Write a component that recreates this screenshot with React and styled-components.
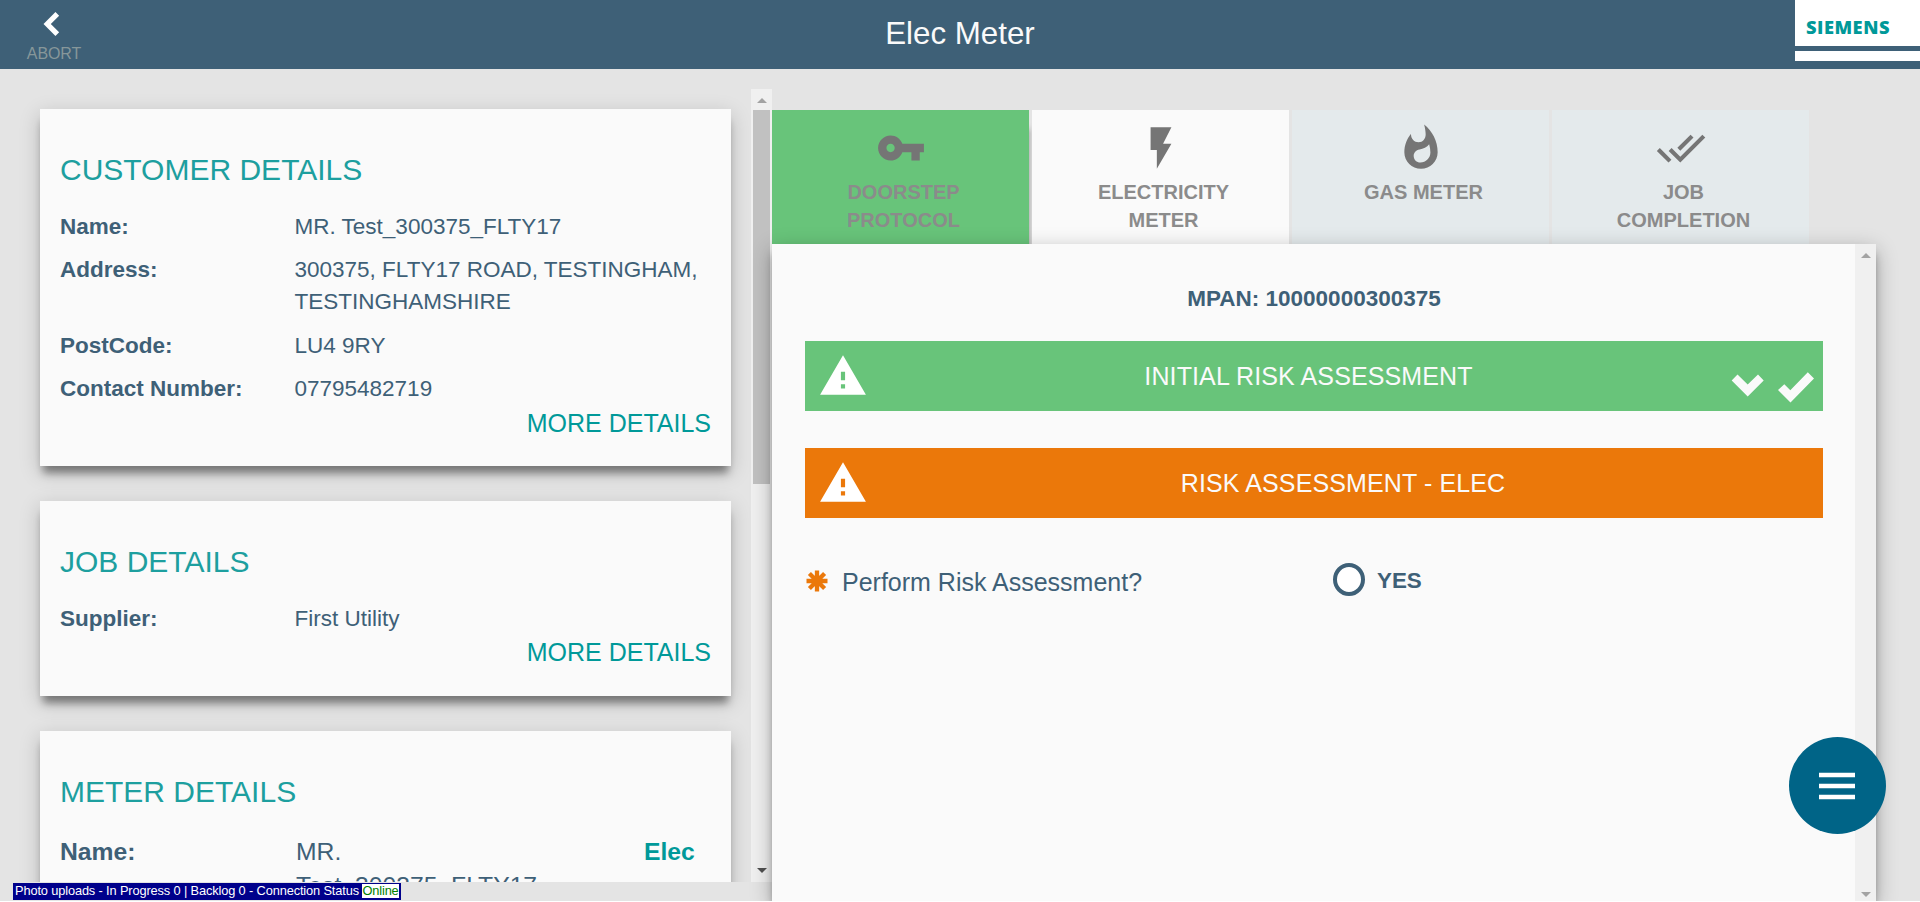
import React from "react";
import styled, { createGlobalStyle } from "styled-components";

const slate = "#3e6077";
const teal = "#009999";

const GlobalStyle = createGlobalStyle`
  * { box-sizing: border-box; }
  body {
    margin: 0;
    background: #fff;
    overflow: hidden;
    font-family: "Liberation Sans", Arial, sans-serif;
    color: ${slate};
  }
`;

const Page = styled.div`
  position: relative;
  width: 1920px;
  height: 901px;
  background: #e4e4e4;
  display: flex;
  flex-direction: column;
  overflow: hidden;
`;

const Header = styled.header`
  flex: none;
  height: 69px;
  background: ${slate};
  display: grid;
  grid-template-columns: 1fr auto 1fr;
`;

const AbortButton = styled.div`
  width: 108px;
  padding-top: 12px;
  display: flex;
  flex-direction: column;
  align-items: center;
  color: #87979a;
  font-size: 16px;
  line-height: 18px;
  letter-spacing: -0.1px;
  svg { display: block; margin-right: 5px; margin-bottom: 9px; }
`;

const Title = styled.h1`
  margin: 0;
  font-size: 31.3px;
  font-weight: 400;
  line-height: 67px;
  color: #fafafa;
`;

const Brand = styled.div`
  justify-self: end;
  width: 125px;
  display: flex;
  flex-direction: column;
  gap: 5px;
`;

const BrandName = styled.div`
  height: 46px;
  padding-left: 11px;
  background: #fff;
  color: ${teal};
  font-family: "Open Sans", "Noto Sans", sans-serif;
  font-weight: 800;
  font-size: 18.3px;
  line-height: 54px;
  letter-spacing: 0.5px;
`;

const BrandStripe = styled.div`
  height: 10px;
  background: #fff;
`;

const Body = styled.main`
  flex: 1;
  min-height: 0;
  display: flex;
`;

const Sidebar = styled.aside`
  width: 772px;
  height: 793px;
  margin-top: 20px;
  display: flex;
  justify-content: space-between;
  overflow: hidden;
`;

const CardList = styled.div`
  width: 731px;
  padding: 20px 0 0 40px;
  display: flex;
  flex-direction: column;
  gap: 35px;
`;

const Card = styled.section`
  flex: none;
  height: ${(p) => p.$height}px;
  padding: 43px 20px 0 20px;
  background: #fafafa;
  box-shadow: 0 10px 8px -3px rgba(0, 0, 0, 0.4), 0 6px 20px rgba(0, 0, 0, 0.19);
`;

const CardTitle = styled.h2`
  margin: 0 0 23px;
  font-size: 30px;
  font-weight: 400;
  line-height: 36px;
  color: #1d9f9f;
`;

const Row = styled.div`
  display: grid;
  grid-template-columns: ${(p) => (p.$large ? "236px 348px 1fr" : "234.5px 1fr")};
  font-size: ${(p) => (p.$large ? 24.7 : 22.5)}px;
  line-height: ${(p) => (p.$large ? 34 : 32)}px;
  margin-top: ${(p) => (p.$large ? 25 : 0)}px;
  margin-bottom: 11.4px;
`;

const Label = styled.span`
  font-weight: 700;
`;

const Value = styled.span`
  width: ${(p) => (p.$narrow ? "250px" : "auto")};
`;

const MeterKind = styled.span`
  font-weight: 700;
  color: ${teal};
`;

const MoreLink = styled.div`
  margin-top: -10px;
  text-align: right;
  font-size: 25px;
  line-height: 32px;
  color: ${teal};
`;

const ScrollTrack = styled.div`
  flex: none;
  width: 21px;
  display: flex;
  flex-direction: column;
  align-items: center;
  justify-content: space-between;
  background: #f0f0f0;
  padding: ${(p) => (p.$sunken ? "9px 0 4px" : "9px 0 9px 0")};
`;

const Thumb = styled.div`
  width: 17px;
  height: 374px;
  margin: 7px 0 auto;
  background: #c1c1c1;
`;

const Arrow = styled.div`
  width: 0;
  border: 5px solid transparent;
  border-top: ${(p) => (p.$up ? 0 : 5)}px solid ${(p) => (p.$up ? "transparent" : p.$color)};
  border-bottom: ${(p) => (p.$up ? 5 : 0)}px solid ${(p) => (p.$up ? p.$color : "transparent")};
`;

const Work = styled.section`
  width: 1104px;
  padding-top: 41px;
  display: flex;
  flex-direction: column;
`;

const Tabs = styled.nav`
  flex: none;
  height: 134px;
  display: flex;
  gap: 3px;
`;

const Tab = styled.div`
  width: 257px;
  padding-top: 13px;
  display: flex;
  flex-direction: column;
  align-items: center;
  background: ${(p) => p.$background};
  box-shadow: ${(p) => (p.$done ? "3px 16px 6px -3px rgba(0,0,0,0.35)" : "none")};
  svg { display: block; width: 50px; height: 50px; fill: #757575; margin-left: 1px; }
`;

const TabLabel = styled.div`
  width: 150px;
  margin: 5px 0 0 6px;
  text-align: center;
  font-size: 20px;
  font-weight: 700;
  line-height: 28px;
  color: #8b8b8b;
`;

const Panel = styled.div`
  position: relative;
  flex: 1;
  min-height: 0;
  display: flex;
  background: #fafafa;
  box-shadow: 0 8px 8px -3px rgba(0, 0, 0, 0.48), 0 6px 20px rgba(0, 0, 0, 0.3);
`;

const PanelContent = styled.div`
  flex: 1;
  padding: 39px 32px 0 33px;
`;

const Mpan = styled.div`
  text-align: center;
  font-size: 22.5px;
  font-weight: 700;
  line-height: 32px;
  margin-bottom: 26px;
`;

const Banner = styled.div`
  height: 70px;
  margin-bottom: 37px;
  padding: 0 9px 0 13px;
  display: flex;
  align-items: center;
  background: ${(p) => p.$background};
  color: #fafafa;
`;

const WarningIcon = styled.svg`
  width: 50px;
  height: 50px;
  fill: #fff;
`;

const BannerText = styled.div`
  flex: 1;
  padding-left: ${(p) => p.$shift}px;
  text-align: center;
  font-size: 25px;
  line-height: 32px;
  letter-spacing: 0.12px;
`;

const BannerMarks = styled.svg`
  width: 83px;
  height: 31px;
  margin-top: 22px;
  fill: #fafafa;
`;

const Question = styled.div`
  display: flex;
  align-items: center;
  height: 38px;
  margin-top: 43px;
  font-size: 25px;
`;

const RequiredMark = styled.svg`
  width: 22px;
  height: 22px;
  margin: 2px 14px 0 1px;
`;

const QuestionText = styled.span`
  width: 491px;
  padding-top: 4px;
`;

const Radio = styled.span`
  width: 32px;
  height: 33px;
  margin: -1px 12px 0 0;
  border: 4px solid ${slate};
  border-radius: 50%;
  background: #fff;
`;

const RadioLabel = styled.span`
  font-size: 22.4px;
  font-weight: 700;
  padding-top: 1px;
`;

const MenuButton = styled.div`
  position: absolute;
  left: 1788.5px;
  top: 737px;
  width: 97px;
  height: 97px;
  border-radius: 50%;
  background: #006487;
  display: flex;
  align-items: center;
  justify-content: center;
`;

const StatusBar = styled.div`
  position: absolute;
  left: 13px;
  top: 883px;
  height: 17px;
  padding: 1px 2px;
  background: #00008b;
  color: #fff;
  font-size: 12.8px;
  line-height: 14px;
  letter-spacing: -0.13px;
  white-space: pre;
`;

const Online = styled.span`
  display: inline-block;
  height: 14px;
  line-height: 14px;
  background: #fff;
  color: #008000;
`;

const tabs = [
  { label: "DOORSTEP PROTOCOL", background: "#68c47a", done: true, path: "M12.65 10C11.83 7.67 9.61 6 7 6c-3.31 0-6 2.69-6 6s2.69 6 6 6c2.61 0 4.83-1.67 5.65-4H17v4h4v-4h2v-4H12.65zM7 14c-1.1 0-2-.9-2-2s.9-2 2-2 2 .9 2 2-.9 2-2 2z" },
  { label: "ELECTRICITY METER", background: "#fafafa", path: "M7 2v11h3v9l7-12h-4l4-8z" },
  { label: "GAS METER", background: "#e4eaec", path: "M13.5.67s.74 2.65.74 4.8c0 2.06-1.35 3.73-3.41 3.73-2.07 0-3.63-1.67-3.63-3.73l.03-.36C5.21 7.51 4 10.62 4 14c0 4.42 3.58 8 8 8s8-3.58 8-8C20 8.61 17.41 3.8 13.5.67zM11.71 19c-1.78 0-3.22-1.4-3.22-3.14 0-1.62 1.05-2.76 2.81-3.12 1.77-.36 3.6-1.21 4.62-2.58.39 1.29.59 2.65.59 4.04 0 2.65-2.15 4.8-4.8 4.8z" },
  { label: "JOB COMPLETION", background: "#e4eaec", path: "M18 7l-1.41-1.41-6.34 6.34 1.41 1.41L18 7zm4.24-1.41L11.66 16.17 7.48 12l-1.41 1.41L11.66 19l12-12-1.42-1.41zM.41 13.41L6 19l1.41-1.41L1.83 12 .41 13.41z" },
];

const Warning = () => (
  <WarningIcon viewBox="0 0 24 24">
    <path d="M1 21h22L12 2 1 21zm12-3h-2v-2h2v2zm0-4h-2v-4h2v4z" />
  </WarningIcon>
);

const DetailRow = ({ label, children }) => (
  <Row>
    <Label>{label}</Label>
    <Value>{children}</Value>
  </Row>
);

export default function App() {
  return (
    <Page>
      <GlobalStyle />
      <Header>
        <AbortButton>
          <svg width="17" height="24" viewBox="0 0 17 24">
            <path d="M14.300 1.900 4.200 12l10.100 10.100" fill="none" stroke="#fff" strokeWidth="5.200" />
          </svg>
          ABORT
        </AbortButton>
        <Title>Elec Meter</Title>
        <Brand>
          <BrandName>SIEMENS</BrandName>
          <BrandStripe />
        </Brand>
      </Header>
      <Body>
        <Sidebar>
          <CardList>
            <Card $height={357}>
              <CardTitle>CUSTOMER DETAILS</CardTitle>
              <DetailRow label="Name:">MR. Test_300375_FLTY17</DetailRow>
              <DetailRow label="Address:">300375, FLTY17 ROAD, TESTINGHAM, TESTINGHAMSHIRE</DetailRow>
              <DetailRow label="PostCode:">LU4 9RY</DetailRow>
              <DetailRow label="Contact Number:">07795482719</DetailRow>
              <MoreLink>MORE DETAILS</MoreLink>
            </Card>
            <Card $height={195}>
              <CardTitle>JOB DETAILS</CardTitle>
              <DetailRow label="Supplier:">First Utility</DetailRow>
              <MoreLink>MORE DETAILS</MoreLink>
            </Card>
            <Card $height={357}>
              <CardTitle>METER DETAILS</CardTitle>
              <Row $large>
                <Label>Name:</Label>
                <Value $narrow>MR. Test_300375_FLTY17</Value>
                <MeterKind>Elec</MeterKind>
              </Row>
            </Card>
          </CardList>
          <ScrollTrack>
            <Arrow $up $color="#a3a3a3" />
            <Thumb />
            <Arrow $color="#505050" />
          </ScrollTrack>
        </Sidebar>
        <Work>
          <Tabs>
            {tabs.map((t) => (
              <Tab key={t.label} $background={t.background} $done={t.done}>
                <svg viewBox="0 0 24 24"><path d={t.path} /></svg>
                <TabLabel>{t.label}</TabLabel>
              </Tab>
            ))}
          </Tabs>
          <Panel>
            <PanelContent>
              <Mpan>MPAN: 10000000300375</Mpan>
              <Banner $background="#68c47a">
                <Warning />
                <BannerText $shift={18}>INITIAL RISK ASSESSMENT</BannerText>
                <BannerMarks viewBox="0 0 83 31">
                  <path d="M.7 8.500 6.500 2.500l10.200 10L27 2.500l5.700 6-16 16z" />
                  <path d="M47 18l6.300-5.800 6 6L76.800.3 83 6.500l-23.500 24z" />
                </BannerMarks>
              </Banner>
              <Banner $background="#eb780a">
                <Warning />
                <BannerText $shift={4}>RISK ASSESSMENT - ELEC</BannerText>
              </Banner>
              <Question>
                <RequiredMark viewBox="0 0 22 22">
                  <path d="M11 0.500v21M0.500 11h21M3.400 3.400l15.200 15.200M18.600 3.400 3.400 18.600" stroke="#eb780a" strokeWidth="4.300" />
                </RequiredMark>
                <QuestionText>Perform Risk Assessment?</QuestionText>
                <Radio />
                <RadioLabel>YES</RadioLabel>
              </Question>
            </PanelContent>
            <ScrollTrack $sunken>
              <Arrow $up $color="#a3a3a3" />
              <Arrow $color="#a3a3a3" />
            </ScrollTrack>
          </Panel>
        </Work>
      </Body>
      <MenuButton>
        <svg width="36" height="28" viewBox="0 0 36 28">
          <path d="M0 3h36M0 14h36M0 25h36" stroke="#fff" strokeWidth="4.600" />
        </svg>
      </MenuButton>
      <StatusBar>
        Photo uploads - In Progress 0 | Backlog 0 - Connection Status <Online>Online</Online>
      </StatusBar>
    </Page>
  );
}
